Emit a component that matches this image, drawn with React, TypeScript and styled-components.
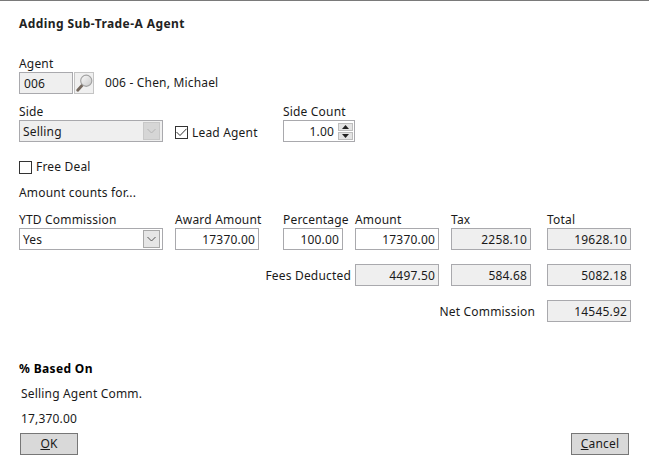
import React from "react";
import styled, { createGlobalStyle } from "styled-components";

const GlobalStyle = createGlobalStyle`
  html, body {
    margin: 0;
    padding: 0;
    background: #fff;
  }
  body {
    font-family: "Noto Sans", "Open Sans", sans-serif;
    font-size: 12px;
    letter-spacing: 0.18px;
    color: #1a1a1a;
  }
`;

const Chevron: React.FC = () => (
  <svg width="9" height="6" viewBox="0 0 9 6" fill="none">
    <path d="M0.5 1 L4.5 5 L8.5 1" stroke="currentColor" strokeWidth="1" />
  </svg>
);

const MagnifierIcon: React.FC = () => (
  <svg width="20" height="20" viewBox="0 0 20 20">
    <defs>
      <linearGradient id="lens" x1="0" y1="0" x2="1" y2="1">
        <stop offset="0" stopColor="#fbfbfb" />
        <stop offset="1" stopColor="#c8c8c8" />
      </linearGradient>
    </defs>
    <path d="M8 12.5 L3 18" stroke="#75695f" strokeWidth="3.2" strokeLinecap="round" />
    <circle cx="12.5" cy="7.5" r="6.2" fill="url(#lens)" stroke="#a2a2a2" strokeWidth="1.3" />
  </svg>
);

const App: React.FC = () => {
  return (
    <Page>
      <GlobalStyle />
      <Title>Adding Sub-Trade-A Agent</Title>

      <AgentLabel>Agent</AgentLabel>
      <AgentRow>
        <Field $width={54} $readOnly $align="left">006</Field>
        <LookupButton><MagnifierIcon /></LookupButton>
        <AgentName>006 - Chen, Michael</AgentName>
      </AgentRow>

      <SideGrid>
        <Label>Side</Label>
        <span />
        <Label>Side Count</Label>
        <Select $disabled>
          <SelectValue>Selling</SelectValue>
          <SelectArrow $disabled><Chevron /></SelectArrow>
        </Select>
        <CheckRow>
          <CheckBox>
            <svg width="11" height="9" viewBox="0 0 11 9" fill="none">
              <path d="M0.5 4 L4 7.5 L10.5 0.8" stroke="#333" strokeWidth="1" />
            </svg>
          </CheckBox>
          <CheckText>Lead Agent</CheckText>
        </CheckRow>
        <Spinner>
          1.00
          <SpinButtons>
            <SpinButton>
              <svg width="7" height="4" viewBox="0 0 7 4"><path d="M3.5 0 L7 4 L0 4 Z" fill="#222" /></svg>
            </SpinButton>
            <SpinButton>
              <svg width="7" height="4" viewBox="0 0 7 4"><path d="M0 0 L7 0 L3.5 4 Z" fill="#222" /></svg>
            </SpinButton>
          </SpinButtons>
        </Spinner>
      </SideGrid>

      <FreeDealRow>
        <CheckBox />
        Free Deal
      </FreeDealRow>

      <Note>Amount counts for...</Note>

      <AmountRow $top={11}>
        <Label $col="ytd">YTD Commission</Label>
        <Label $col="award">Award Amount</Label>
        <Label $col="pct">Percentage</Label>
        <Label $col="amount">Amount</Label>
        <Label $col="tax">Tax</Label>
        <Label $col="total">Total</Label>
      </AmountRow>
      <AmountRow>
        <Select $col="ytd">
          <SelectValue>Yes</SelectValue>
          <SelectArrow><Chevron /></SelectArrow>
        </Select>
        <Field $col="award">17370.00</Field>
        <Field $col="pct">100.00</Field>
        <Field $col="amount">17370.00</Field>
        <Field $col="tax" $readOnly>2258.10</Field>
        <Field $col="total" $readOnly>19628.10</Field>
      </AmountRow>

      <AmountRow $top={14}>
        <FeesLabel>Fees Deducted</FeesLabel>
        <Field $col="amount" $readOnly>4497.50</Field>
        <Field $col="tax" $readOnly>584.68</Field>
        <Field $col="total" $readOnly>5082.18</Field>
      </AmountRow>

      <AmountRow $top={14}>
        <NetLabel>Net Commission</NetLabel>
        <Field $col="total" $readOnly>14545.92</Field>
      </AmountRow>

      <SectionTitle>% Based On</SectionTitle>
      <BasedText>Selling Agent Comm.</BasedText>
      <BasedText>17,370.00</BasedText>

      <Footer>
        <Button><u>O</u>K</Button>
        <Button><u>C</u>ancel</Button>
      </Footer>
    </Page>
  );
};

const Page = styled.div`
  width: 649px;
  height: 466px;
  box-sizing: border-box;
  border-top: 1px solid #7a7a7a;
  padding: 0 18px 0 19px;
  overflow: hidden;
  line-height: 16px;
`;

const Title = styled.h1`
  margin: 15px 0 0;
  font-size: 12px;
  line-height: 16px;
  font-weight: 700;
  letter-spacing: 0.43px;
  height: 16px;
  color: #222;
`;

const Label = styled.div<{ $col?: string }>`
  grid-column-start: ${({ $col }) => $col || "auto"};
  height: 16px;
  line-height: 16px;
  white-space: nowrap;
`;

const AgentLabel = styled(Label)`
  margin-top: 24px;
`;

const AgentRow = styled.div`
  display: flex;
  align-items: center;
  height: 22px;
`;

const Field = styled.div<{ $col?: string; $width?: number; $readOnly?: boolean; $align?: string }>`
  grid-column-start: ${({ $col }) => $col || "auto"};
  box-sizing: border-box;
  width: ${({ $width }) => ($width ? `${$width}px` : "auto")};
  height: 22px;
  line-height: 21px;
  padding: 0 3px 0 4px;
  border: 1px solid #a9a9ad;
  background: ${({ $readOnly }) => ($readOnly ? "#efefef" : "#fff")};
  text-align: ${({ $align }) => $align || "right"};
`;

const LookupButton = styled.div`
  box-sizing: border-box;
  width: 20px;
  height: 22px;
  margin-left: 1px;
  border: 1px solid #c4c4c4;
  background: #f0f0f0;
  display: flex;
  align-items: center;
  justify-content: center;
`;

const AgentName = styled.span`
  margin-left: 11px;
`;

const SideGrid = styled.div`
  display: grid;
  grid-template-columns: 144px 120px 72px;
  grid-template-rows: 16px 22px;
  margin-top: 10px;
`;

const Select = styled.div<{ $col?: string; $disabled?: boolean }>`
  grid-column-start: ${({ $col }) => $col || "auto"};
  box-sizing: border-box;
  height: 22px;
  padding: 0 2px 0 3px;
  border: 1px solid #a9a9ad;
  background: ${({ $disabled }) => ($disabled ? "#efefef" : "#fff")};
  display: flex;
  align-items: center;
  justify-content: space-between;
`;

const SelectValue = styled.span`
  margin-top: 2px;
`;

const SelectArrow = styled.span<{ $disabled?: boolean }>`
  box-sizing: border-box;
  width: 17px;
  height: 18px;
  border: 1px solid ${({ $disabled }) => ($disabled ? "#c8c8c8" : "#a8a8a8")};
  background: ${({ $disabled }) => ($disabled ? "#d6d6d6" : "#e6e6e6")};
  color: ${({ $disabled }) => ($disabled ? "#b4b4b4" : "#555")};
  display: flex;
  align-items: center;
  justify-content: center;
`;

const CheckRow = styled.div`
  display: flex;
  align-items: center;
  gap: 4px;
  margin: 2px 0 0 12px;
  white-space: nowrap;
`;

const CheckText = styled.span`
  margin-top: 2px;
`;

const CheckBox = styled.span`
  box-sizing: border-box;
  width: 13px;
  height: 13px;
  border: 1px solid #333;
  background: #fff;
  display: flex;
  align-items: center;
  justify-content: center;
  flex: none;
`;

const Spinner = styled.div`
  box-sizing: border-box;
  height: 22px;
  line-height: 22px;
  border: 1px solid #a9a9ad;
  display: flex;
  justify-content: flex-end;
  gap: 4px;
  padding-right: 1px;
`;

const SpinButtons = styled.div`
  display: flex;
  flex-direction: column;
  justify-content: center;
  gap: 1px;
  width: 15px;
`;

const SpinButton = styled.span`
  height: 8px;
  background: #e4e4e4;
  border: 1px solid #bdbdbd;
  box-sizing: border-box;
  display: flex;
  align-items: center;
  justify-content: center;
`;

const FreeDealRow = styled.div`
  display: flex;
  align-items: center;
  gap: 4px;
  margin-top: 17px;
  height: 16px;
`;

const Note = styled.div`
  margin-top: 10px;
  height: 16px;
`;

const AmountRow = styled.div<{ $top?: number }>`
  display: grid;
  grid-template-columns:
    [ytd] 144px 12px [award] 84px 24px [pct] 60px 12px
    [amount] 84px 12px [tax] 80px 16px [total] 84px;
  margin-top: ${({ $top }) => $top || 0}px;
`;

const FeesLabel = styled.span`
  grid-column: ytd / amount;
  height: 22px;
  padding-right: 4px;
  text-align: right;
  line-height: 24px;
  white-space: nowrap;
`;

const NetLabel = styled.span`
  grid-column: ytd / total;
  height: 22px;
  padding-right: 12px;
  text-align: right;
  line-height: 24px;
  white-space: nowrap;
`;

const SectionTitle = styled.h2`
  margin: 39px 0 0;
  height: 16px;
  font-size: 12px;
  line-height: 16px;
  font-weight: 700;
  letter-spacing: 0.35px;
  color: #000;
`;

const BasedText = styled.div`
  margin: 9px 0 0 2px;
  height: 16px;
`;

const Footer = styled.div`
  display: flex;
  justify-content: space-between;
  margin: 6px 2px 0 1px;
`;

const Button = styled.div`
  box-sizing: border-box;
  width: 58px;
  height: 22px;
  line-height: 20px;
  border: 1px solid #777;
  background: #d9d9d9;
  text-align: center;
`;

export default App;
